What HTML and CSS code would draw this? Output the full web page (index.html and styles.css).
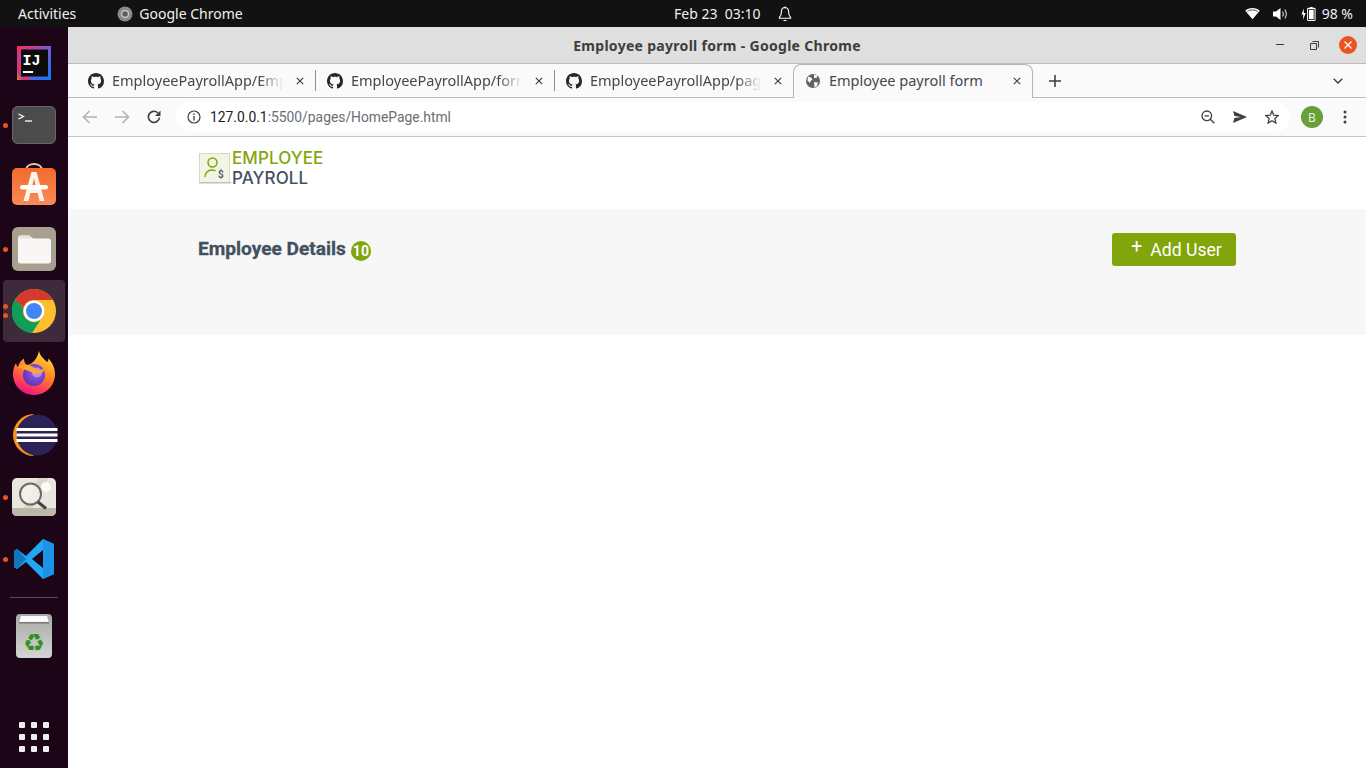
FILE: index.html
```html
<!DOCTYPE html>
<html lang="en">
<head>
    <meta charset="UTF-8">
    <meta name="viewport" content="width=device-width, initial-scale=1.0">
    <title>Employee payroll form</title>
    <link rel="stylesheet" href="styles.css">
</head>
<body>
    <svg class="defs" width="0" height="0">
        <symbol id="gh" viewBox="0 0 16 16"><path d="M8 0C3.58 0 0 3.58 0 8c0 3.54 2.29 6.53 5.47 7.59.4.07.55-.17.55-.38 0-.19-.01-.82-.01-1.49-2.01.37-2.53-.49-2.69-.94-.09-.23-.48-.94-.82-1.13-.28-.15-.68-.52-.01-.53.63-.01 1.08.58 1.23.82.72 1.21 1.87.87 2.33.66.07-.52.28-.87.51-1.07-1.78-.2-3.64-.89-3.64-3.95 0-.87.31-1.59.82-2.15-.08-.2-.36-1.02.08-2.12 0 0 .67-.21 2.2.82.64-.18 1.32-.27 2-.27.68 0 1.36.09 2 .27 1.53-1.04 2.2-.82 2.2-.82.44 1.1.16 1.92.08 2.12.51.56.82 1.27.82 2.15 0 3.07-1.87 3.75-3.65 3.95.29.25.54.73.54 1.48 0 1.07-.01 1.93-.01 2.2 0 .21.15.46.55.38A8.013 8.013 0 0016 8c0-4.42-3.58-8-8-8z"/></symbol>
        <symbol id="x" viewBox="0 0 10 10"><path d="M1 1l8 8M9 1l-8 8" stroke="#3c4043" stroke-width="1.5" fill="none"/></symbol>
    </svg>

    <!-- gnome top bar -->
    <header class="topbar">
        <div class="top-left">
            <span class="activities">Activities</span>
            <svg class="top-chrome" width="16" height="16" viewBox="0 0 16 16"><circle cx="8" cy="8" r="7.5" fill="#8a8a8a"/><circle cx="8" cy="8" r="3.4" fill="#5b5b5b" stroke="#cfcfcf" stroke-width="1.2"/></svg>
            <span>Google Chrome</span>
        </div>
        <div class="top-clock">
            <span>Feb 23&nbsp; 03:10</span>
            <svg width="14" height="16" viewBox="0 0 14 16"><path d="M7 1.500c-2.600 0-3.600 2-3.600 4.400 0 2.800-.8 4.400-2 5.600v.7h11.200v-.7c-1.200-1.200-2-2.800-2-5.600C10.600 3.500 9.600 1.500 7 1.500zM5.500 14.500h3" fill="none" stroke="#fff" stroke-width="1.100"/><path d="M6 1.500h2" stroke="#fff" stroke-width="1.500"/></svg>
        </div>
        <div class="top-right">
            <svg width="15" height="13" viewBox="0 0 16 13"><path d="M8 12.500L.3 3.600C2.300 1.700 5 .6 8 .6s5.700 1.100 7.700 3z" fill="#fff"/><path d="M2.500 4.400C4 3.300 6 2.700 8 2.700s4 .6 5.500 1.700" stroke="#111" stroke-width=".8" fill="none"/></svg>
            <svg class="ic-vol" width="15" height="14" viewBox="0 0 15 14"><path d="M0 4.500h3L7.500 1v12L3 9.500H0z" fill="#fff"/><path d="M9.500 4.500c1 1.500 1 3.500 0 5M11.800 2.500c1.800 2.700 1.800 6.300 0 9" stroke="#ddd" stroke-width="1.100" fill="none"/></svg>
            <svg class="ic-bat" width="15" height="16" viewBox="0 0 16 16"><path d="M3 2L.5 8.500h2L2 14l3-7H3z" fill="#fff"/><rect x="7" y="2" width="8" height="13" rx="1" fill="none" stroke="#fff" stroke-width="1.100"/><rect x="9.500" y=".5" width="3" height="1.500" fill="#fff"/><rect x="8.500" y="3.500" width="5" height="10" fill="#fff"/></svg>
            <span>98 %</span>
        </div>
    </header>

    <div class="desktop">
        <!-- launcher -->
        <nav class="dock">
            <div class="dock-item">
                <svg width="36" height="36" viewBox="0 0 36 36"><defs><linearGradient id="ij" x1="0" y1="1" x2="1" y2="0"><stop offset="0" stop-color="#f97a12"/><stop offset=".3" stop-color="#b0448c"/><stop offset=".55" stop-color="#fe2857"/><stop offset="1" stop-color="#3b7cf5"/></linearGradient><linearGradient id="ij2" x1="0" y1="0" x2="1" y2="1"><stop offset="0" stop-color="#fe2857"/><stop offset=".5" stop-color="#7a5ad0"/><stop offset="1" stop-color="#087cfa"/></linearGradient></defs><rect x="1" y="1" width="34" height="34" fill="url(#ij2)"/><rect x="1" y="18" width="12" height="17" fill="url(#ij)"/><rect x="5" y="4.500" width="27" height="27" fill="#0c0c0c"/><text x="6.500" y="19.500" class="ij-text">IJ</text><rect x="7" y="26" width="10" height="2" fill="#fff"/></svg>
            </div>
            <div class="dock-item run">
                <svg width="44" height="38" viewBox="0 0 44 38"><rect width="44" height="38" rx="6" fill="#4b4b4b"/><rect x=".5" y=".5" width="43" height="37" rx="5.500" fill="none" stroke="#666"/><path d="M6.500 8l5 2.500-5 2.500" fill="none" stroke="#fff" stroke-width="1.300"/><path d="M13 15h7" stroke="#fff" stroke-width="1.300"/></svg>
            </div>
            <div class="dock-item shop">
                <svg width="44" height="42" viewBox="0 0 44 42"><defs><linearGradient id="sw" x1="0" y1="0" x2="0" y2="1"><stop offset="0" stop-color="#f36a2b"/><stop offset="1" stop-color="#f98b58"/></linearGradient></defs><path d="M14 7c0-8 16-8 16 0" fill="none" stroke="#e9c9a0" stroke-width="1.800"/><rect y="5" width="44" height="37" rx="5" fill="url(#sw)"/><path d="M19.500 9h5l8 29h-5l-1.800-8H18.300l-1.800 8h-5zM20 24h4l-2-9z" fill="#fdf3ec"/><rect x="8" y="22" width="28" height="4.500" rx="2.200" fill="#fff"/></svg>
            </div>
            <div class="dock-item run">
                <svg width="44" height="44" viewBox="0 0 44 44"><rect width="44" height="44" rx="6" fill="#a8a08f"/><path d="M6 11c0-1.500 1-2.500 2.500-2.500H17l4 3h15.500c1.500 0 2.500 1 2.500 2.500v20c0 1.500-1 2.500-2.500 2.500h-28C7 36.500 6 35.500 6 34z" fill="#f9f7f5"/><path d="M6 11c0-1.500 1-2.500 2.500-2.500H17l4 3H8c-1 0-2 .5-2 1.500z" fill="#e6e3dc"/></svg>
            </div>
            <div class="dock-item active">
                <span class="run-dot first"></span><span class="run-dot second"></span>
                <svg width="44" height="44" viewBox="0 0 44 44"><circle cx="22" cy="22" r="22" fill="#fbc02d"/><path d="M22 0A22 22 0 0 1 41 11H22a11 11 0 0 0-10.500 7.500L3 11.500A22 22 0 0 1 22 0z" fill="#d5392c"/><path d="M3 10.500A22 22 0 0 0 20 44l8.500-13a11 11 0 0 1-17-12z" fill="#0f9d58"/><circle cx="22" cy="22" r="10.500" fill="#fff"/><circle cx="22" cy="22" r="8" fill="#4285f4"/></svg>
            </div>
            <div class="dock-item">
                <svg width="44" height="44" viewBox="0 0 44 44"><defs><linearGradient id="ff" x1=".75" y1="0" x2=".35" y2="1"><stop offset="0" stop-color="#ffe03a"/><stop offset=".45" stop-color="#ff8a1f"/><stop offset=".8" stop-color="#ff3a5c"/><stop offset="1" stop-color="#e31587"/></linearGradient><radialGradient id="ffg" cx=".6" cy=".4" r=".7"><stop offset="0" stop-color="#9a5cf0"/><stop offset="1" stop-color="#5a2fb0"/></radialGradient></defs><path d="M27 0c1 5 5 8 8 11 1-.5 1.500-2 1.500-3.500C40.500 12 43 17 43 23c0 12-9.500 21-21 21S1 35 1 23c0-4 1-8 3-11 .3 1.500.8 3 2 4 .8-3.500 2.800-6.500 6-8.500 0 3 1 5.500 3 6.500 5-1 10-5 12-14z" fill="url(#ff)"/><circle cx="22" cy="24" r="11" fill="url(#ffg)"/><circle cx="25" cy="21.500" r="5" fill="#b58af5"/><path d="M6 16c5-3 12-3 16 .5 3 2.500 7 3.500 11 1-1.500 5-8 7-13 4-4-2.500-9-3-14-5.500z" fill="#ffa52e"/></svg>
            </div>
            <div class="dock-item">
                <svg width="48" height="44" viewBox="0 0 48 44"><path d="M24 1A21 21 0 1 0 24 43 A24 24 0 0 1 24 1z" fill="#f7941e"/><circle cx="27" cy="22" r="20.500" fill="#2c2255"/><path d="M6.500 15h41v3h-41zM6.500 20.500h41v3h-41zM6.500 26h41v3h-41z" fill="#fff"/></svg>
            </div>
            <div class="dock-item run">
                <svg width="44" height="38" viewBox="0 0 44 38"><rect width="44" height="38" rx="5" fill="#e8e6df"/><path d="M0 30h44v3c0 3-2 5-5 5H5c-3 0-5-2-5-5z" fill="#bcb9a8"/><path d="M26 0h10L20 30h-8z" fill="#d9d6cc"/><circle cx="34" cy="9" r="5" fill="#fafafa"/><circle cx="18.500" cy="16" r="10.500" fill="#f6f5f1" fill-opacity=".7" stroke="#6a6963" stroke-width="2"/><path d="M26 24l8 6.500" stroke="#46453f" stroke-width="3"/></svg>
            </div>
            <div class="dock-item run">
                <svg width="42" height="42" viewBox="0 0 42 42"><path d="M30 1L13 18 4 11 1 13v16l3 2 9-7 17 17 11-5V6zM30 12v18l-11-9z" fill="#22a7f2"/><path d="M30 1l11 5v30l-11 5z" fill="#1b93e6"/><path d="M4 11L1 13v16l3 2 9-10z" fill="#0f75bd"/></svg>
            </div>
            <div class="dock-sep"></div>
            <div class="dock-item trash">
                <svg width="36" height="44" viewBox="0 0 36 44"><defs><linearGradient id="tr" x1="0" y1="0" x2="0" y2="1"><stop offset="0" stop-color="#a9a9a6"/><stop offset="1" stop-color="#d4d4d2"/></linearGradient></defs><rect width="36" height="44" rx="4" fill="url(#tr)"/><path d="M5 2h26l2 7H3z" fill="#fafafa"/><rect x="3" y="8" width="30" height="1.500" fill="#777"/><text x="18" y="37" class="recycle">♻</text></svg>
            </div>
            <div class="app-grid">
                <i></i><i></i><i></i><i></i><i></i><i></i><i></i><i></i><i></i>
            </div>
        </nav>

        <div class="window">
            <div class="titlebar">
                <span class="win-title">Employee payroll form - Google Chrome</span>
                <div class="win-btns">
                    <svg width="8" height="2" viewBox="0 0 8 2"><rect width="8" height="1" fill="#3c3c3c"/></svg>
                    <svg width="9" height="9" viewBox="0 0 9 9"><path d="M2.500 .5h6v6M.5 2.500h6v6h-6z" fill="none" stroke="#3c3c3c"/></svg>
                    <span class="win-close"><svg width="8" height="8" viewBox="0 0 8 8"><path d="M.5 .5l7 7M7.500 .5l-7 7" stroke="#fff" stroke-width="1.300"/></svg></span>
                </div>
            </div>

            <div class="tabstrip">
                <div class="tab">
                    <svg class="fav" width="16" height="16"><use href="#gh"/></svg>
                    <span class="tab-title">EmployeePayrollApp/Emp</span>
                    <svg class="tab-x" width="8" height="8"><use href="#x"/></svg>
                </div>
                <div class="tab">
                    <svg class="fav" width="16" height="16"><use href="#gh"/></svg>
                    <span class="tab-title">EmployeePayrollApp/form</span>
                    <svg class="tab-x" width="8" height="8"><use href="#x"/></svg>
                </div>
                <div class="tab last">
                    <svg class="fav" width="16" height="16"><use href="#gh"/></svg>
                    <span class="tab-title">EmployeePayrollApp/pag</span>
                    <svg class="tab-x" width="8" height="8"><use href="#x"/></svg>
                </div>
                <div class="tab current">
                    <svg class="fav" width="16" height="16" viewBox="0 0 16 16"><circle cx="8" cy="8" r="7" fill="#5f6368"/><path d="M3 3.500l3 1 1.500 2-2 1.500-.5 2-2.500-2.500zM9 1.500l3.500 1-1 2.500L9 5zM9 9l4 .5-1 3.500-2.500 1.500z" fill="#fafafa"/></svg>
                    <span class="tab-title plain">Employee payroll form</span>
                    <svg class="tab-x" width="8" height="8"><use href="#x"/></svg>
                </div>
                <svg class="new-tab" width="12" height="12" viewBox="0 0 12 12"><path d="M6 0v12M0 6h12" stroke="#3c4043" stroke-width="1.600"/></svg>
                <svg class="tab-menu" width="10" height="6" viewBox="0 0 10 6"><path d="M.7 .7L5 5l4.300-4.300" fill="none" stroke="#3c4043" stroke-width="1.400"/></svg>
            </div>

            <div class="toolbar">
                <svg class="nav-ic" width="16" height="14" viewBox="0 0 16 14"><path d="M15 7H2M7.500 1L1.500 7l6 6" fill="none" stroke="#b0b2b5" stroke-width="1.600"/></svg>
                <svg class="nav-ic" width="16" height="14" viewBox="0 0 16 14"><path d="M1 7h13M8.500 1l6 6-6 6" fill="none" stroke="#b0b2b5" stroke-width="1.600"/></svg>
                <svg class="nav-ic" width="16" height="16" viewBox="0 0 16 16"><path d="M13.500 8.500A5.600 5.600 0 1 1 11.800 3.800" fill="none" stroke="#3c4043" stroke-width="1.700"/><path d="M14.500 1.500v5.500H9z" fill="#3c4043"/></svg>
                <div class="omnibox">
                    <svg width="14" height="14" viewBox="0 0 14 14"><circle cx="7" cy="7" r="6" fill="none" stroke="#3c4043" stroke-width="1.200"/><path d="M7 6v4.500M7 3.500v1.500" stroke="#3c4043" stroke-width="1.300"/></svg>
                    <span class="url"><b>127.0.0.1</b>:5500/pages/HomePage.html</span>
                    <div class="omni-icons">
                        <svg width="14" height="14" viewBox="0 0 14 14"><circle cx="5.800" cy="5.800" r="4.800" fill="none" stroke="#3c4043" stroke-width="1.300"/><path d="M3.500 5.800h4.600M9.300 9.300l4 4" stroke="#3c4043" stroke-width="1.300"/></svg>
                        <svg width="14" height="12" viewBox="0 0 14 12"><path d="M0 0l14 6-14 6 1.500-5L8 6 1.500 5z" fill="#3c4043"/></svg>
                        <svg width="14" height="14" viewBox="0 0 14 14"><path d="M7 1l1.800 4.200 4.500.4-3.400 3 1 4.400L7 10.700 3.100 13l1-4.400-3.400-3 4.500-.4z" fill="none" stroke="#3c4043" stroke-width="1.300"/></svg>
                    </div>
                </div>
                <span class="avatar">B</span>
                <svg class="dots" width="4" height="14" viewBox="0 0 4 14"><circle cx="2" cy="2" r="1.500" fill="#3c4043"/><circle cx="2" cy="7" r="1.500" fill="#3c4043"/><circle cx="2" cy="12" r="1.500" fill="#3c4043"/></svg>
            </div>

            <!-- the page itself -->
            <main class="page">
                <div class="logo-row">
                    <svg class="logo-ic" width="33" height="31" viewBox="0 0 33 31"><rect x="1.500" y=".5" width="30" height="29" fill="#f1f5e3" stroke="#d5dac8"/><rect x="1" y="29" width="32" height="1.500" fill="#bfc3bb"/><circle cx="14.500" cy="9.500" r="4.500" fill="none" stroke="#82a50c" stroke-width="1.500"/><path d="M7 24c0-4 3-7 7-7 1.500 0 2.500.3 3.500.8" fill="none" stroke="#82a50c" stroke-width="1.500"/><text x="20" y="25" class="logo-dollar">$</text></svg>
                    <div class="logo-text">
                        <span class="logo-top">EMPLOYEE</span>
                        <span class="logo-bottom">PAYROLL</span>
                    </div>
                </div>
                <section class="band">
                    <div class="heading">
                        <span class="heading-text">Employee Details</span>
                        <span class="count">10</span>
                    </div>
                    <a class="add-btn" href="#"><span class="plus">+</span>Add User</a>
                </section>
            </main>
        </div>
    </div>
</body>
</html>
```

FILE: styles.css
```css
* {
    box-sizing: border-box;
}
html, body {
    margin: 0;
    height: 768px;
    overflow: hidden;
}
body {
    font-family: "Noto Sans", "Open Sans", sans-serif;
    background: #fff;
}
.defs {
    position: absolute;
}

/* top bar */
.topbar {
    height: 27px;
    background: #121212;
    color: #f0f0f0;
    font-size: 14px;
    display: flex;
    align-items: center;
    padding: 0 13px 0 18px;
    line-height: 27px;
}
.top-left {
    display: flex;
    align-items: center;
    width: 656px;
}
.activities {
    margin-right: 41px;
}
.top-chrome {
    margin-right: 6px;
}
.top-clock {
    display: flex;
    align-items: center;
    gap: 17px;
}
.top-right {
    display: flex;
    align-items: center;
    margin-left: auto;
}
.ic-vol {
    margin-left: 13px;
}
.ic-bat {
    margin: 0 6px 0 13px;
}

.desktop {
    display: flex;
    height: 741px;
}

/* launcher */
.dock {
    width: 68px;
    background: #1d0518;
    display: flex;
    flex-direction: column;
    align-items: center;
    padding: 5px 0 0;
    flex: none;
}
.dock-item {
    width: 62px;
    height: 62px;
    flex: none;
    display: flex;
    align-items: center;
    justify-content: center;
    position: relative;
}
.dock-item.shop {
    padding-bottom: 6px;
}
.dock-item.active {
    background: #3d2a3a;
    border-radius: 4px;
}
.dock-item.run::before,
.run-dot {
    content: "";
    position: absolute;
    left: 0;
    top: 29px;
    width: 5px;
    height: 5px;
    border-radius: 50%;
    background: #e95420;
}
.run-dot.first {
    top: 24px;
}
.run-dot.second {
    top: 33px;
}
.dock-sep {
    width: 48px;
    height: 1px;
    background: #5d4a5a;
    margin: 7px 0;
    flex: none;
}
.app-grid {
    display: grid;
    grid-template-columns: repeat(3, 6px);
    gap: 6px;
    margin-top: 55px;
}
.app-grid i {
    width: 6px;
    height: 6px;
    background: #eee;
    border-radius: 1px;
}
.ij-text {
    font-family: "Liberation Mono", monospace;
    font-weight: 700;
    font-size: 15px;
    fill: #fff;
}
.recycle {
    font-family: "DejaVu Sans", sans-serif;
    font-size: 24px;
    fill: #2f8f1f;
    text-anchor: middle;
}

/* browser */
.window {
    flex: 1;
    display: flex;
    flex-direction: column;
    min-width: 0;
}
.titlebar {
    height: 37px;
    background: #dfdfdf;
    display: flex;
    align-items: center;
    justify-content: center;
    position: relative;
    border-bottom: 1px solid #bdbdbd;
}
.win-title {
    font-size: 14px;
    font-weight: 700;
    color: #3d3d3d;
    letter-spacing: 0.3px;
}
.win-btns {
    position: absolute;
    right: 9px;
    top: 0;
    height: 36px;
    display: flex;
    align-items: center;
    gap: 26px;
}
.win-close {
    width: 18px;
    height: 18px;
    border-radius: 50%;
    background: #e95420;
    display: flex;
    align-items: center;
    justify-content: center;
    margin-left: -6px;
}
.tabstrip {
    height: 34px;
    background: #fafafa;
    border-bottom: 1px solid #bdbdbd;
    display: flex;
    align-items: center;
    padding-left: 12px;
    position: relative;
}
.tab {
    width: 239px;
    height: 33px;
    flex: none;
    display: flex;
    align-items: center;
    padding: 0 15px 0 8px;
    position: relative;
    font-size: 14.5px;
    color: #45484c;
}
.tab::after {
    content: "";
    position: absolute;
    right: 3px;
    top: 6px;
    height: 21px;
    width: 1px;
    background: #8e9093;
}
.tab.last {
    margin-right: -3px;
}
.tab.last::after,
.tab.current::after {
    display: none;
}
.tab.current {
    width: 240px;
    height: 34px;
    margin-top: 1px;
    margin-left: -1px;
    background: #fafafa;
    border: 1px solid #b5b5b5;
    border-bottom: none;
    border-radius: 8px 8px 0 0;
    padding: 0 11px 2px 11px;
}
.fav {
    flex: none;
    margin-right: 8px;
    fill: #24292e;
}
.tab-title {
    flex: 1;
    overflow: hidden;
    white-space: nowrap;
    margin-top: -2px;
    -webkit-mask-image: linear-gradient(to right, #000 80%, transparent 93%);
    mask-image: linear-gradient(to right, #000 80%, transparent 93%);
}
.tab-title.plain {
    -webkit-mask-image: none;
    mask-image: none;
}
.tab-x {
    flex: none;
}
.new-tab {
    margin-left: 16px;
}
.tab-menu {
    position: absolute;
    right: 23px;
    top: 14px;
}
.toolbar {
    height: 39px;
    background: #fafafa;
    border-bottom: 1px solid #c4c4c4;
    display: flex;
    align-items: center;
    padding-left: 14px;
}
.nav-ic {
    margin-right: 16px;
}
.omnibox {
    width: 1114px;
    height: 30px;
    margin-left: -2px;
    background: #fff;
    border-radius: 15px;
    display: flex;
    align-items: center;
    padding-left: 11px;
}
.url {
    font-family: "Roboto", sans-serif;
    font-size: 13.85px;
    color: #6b6e72;
    margin-left: 9px;
}
.url b {
    font-weight: 400;
    color: #202124;
}
.omni-icons {
    margin-left: auto;
    display: flex;
    align-items: center;
    gap: 18px;
    padding-right: 11px;
}
.avatar {
    width: 22px;
    height: 22px;
    border-radius: 50%;
    background: #689f38;
    color: #e8f0de;
    font-size: 12px;
    display: flex;
    align-items: center;
    justify-content: center;
    margin-left: 11px;
}
.dots {
    margin-left: 20px;
}

/* page */
.page {
    flex: 1;
    background: #fff;
}
.logo-row {
    height: 72px;
    padding: 11px 0 0 130px;
    display: flex;
    align-items: flex-start;
}
.logo-ic {
    flex: none;
    margin: 5px 1px 0 0;
}
.logo-dollar {
    font-family: "Roboto", sans-serif;
    font-weight: 700;
    font-size: 10px;
    fill: #55606e;
}
.logo-text {
    display: flex;
    flex-direction: column;
    font-family: "Inter", sans-serif;
    font-size: 17px;
    font-weight: 500;
    line-height: 20px;
    letter-spacing: 0.1px;
}
.logo-top {
    color: #82a50c;
}
.logo-bottom {
    color: #42515f;
}
.band {
    height: 126px;
    background: #f7f7f7;
    padding: 24px 130px 0 130px;
    display: flex;
    justify-content: space-between;
    align-items: flex-start;
}
.heading {
    display: flex;
    align-items: center;
    height: 32px;
}
.heading-text {
    font-family: "Roboto", sans-serif;
    font-size: 19.1px;
    font-weight: 700;
    color: #42515f;
    -webkit-text-stroke: 0.3px #42515f;
    margin-top: -2px;
}
.count {
    width: 20px;
    height: 20px;
    border-radius: 50%;
    background: #82a50c;
    color: #fff;
    font-family: "Roboto", sans-serif;
    font-size: 14px;
    font-weight: 700;
    display: flex;
    align-items: center;
    justify-content: center;
    margin: 4px 0 0 5px;
}
.add-btn {
    width: 124px;
    height: 33px;
    background: #82a50c;
    border-radius: 3px;
    color: #fff;
    font-family: "Roboto", sans-serif;
    font-size: 17.6px;
    text-decoration: none;
    display: flex;
    align-items: center;
    padding-left: 18px;
}
.plus {
    font-size: 20px;
    line-height: 20px;
    margin: -7px 8px 0 1px;
}
```
